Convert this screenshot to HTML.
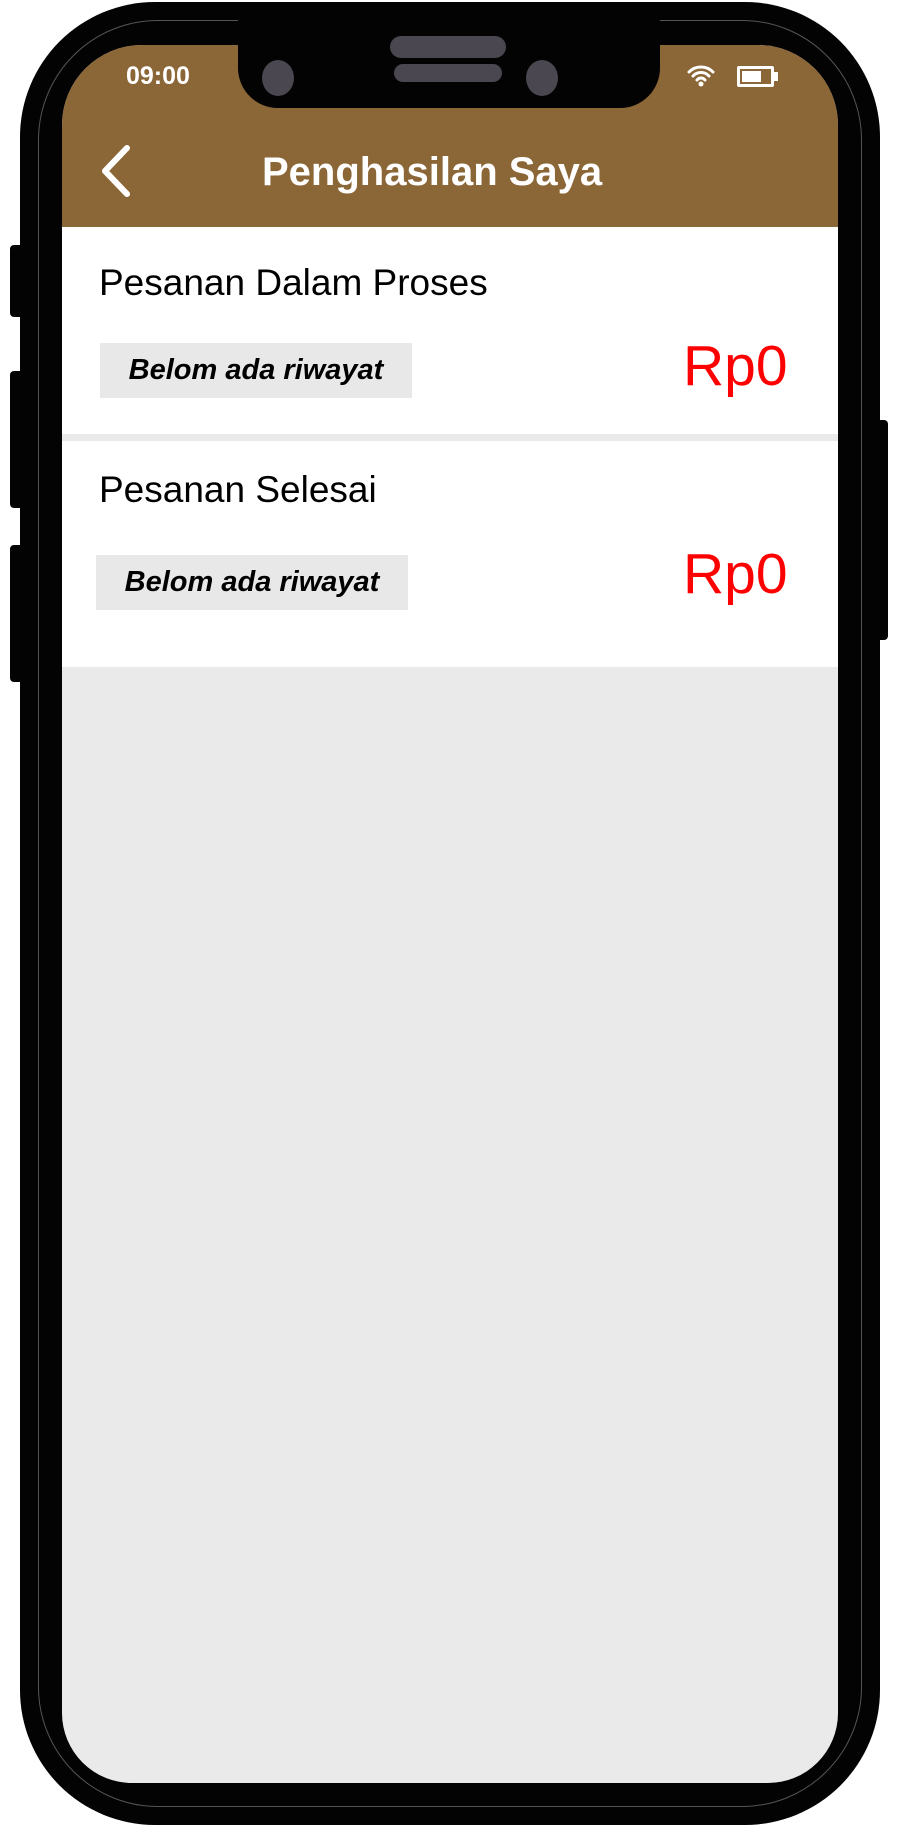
<!DOCTYPE html>
<html><head><meta charset="utf-8"><style>
*{margin:0;padding:0;box-sizing:border-box}
html,body{width:898px;height:1825px;background:#fff;overflow:hidden;position:relative;font-family:"Liberation Sans",sans-serif}
.abs{position:absolute}
.phone{left:20px;top:2px;width:860px;height:1823px;background:#030304;border-radius:135px}
.ring{left:38px;top:20px;width:824px;height:1787px;border:1.5px solid #555;border-radius:120px}
.screen{left:62px;top:45px;width:776px;height:1738px;background:#eaeaea;border-radius:80px 80px 70px 70px;overflow:hidden}
.btn{background:#030304;border-radius:4px}
.pill{height:55px;background:#e8e8e8;font-weight:bold;font-style:italic;font-size:29px;line-height:55px;text-align:center}
</style></head><body>
<div class="abs btn" style="left:10px;top:245px;width:14px;height:72px"></div>
<div class="abs btn" style="left:10px;top:371px;width:14px;height:137px"></div>
<div class="abs btn" style="left:10px;top:545px;width:14px;height:137px"></div>
<div class="abs btn" style="left:874px;top:420px;width:14px;height:220px"></div>
<div class="abs phone"></div>
<div class="abs ring"></div>
<div class="abs screen">
  <div class="abs" style="left:0;top:0;width:776px;height:182px;background:#8b6636"></div>
  <div class="abs" style="left:0;top:182px;width:776px;height:207px;background:#fff"></div>
  <div class="abs" style="left:0;top:396px;width:776px;height:226px;background:#fff"></div>
</div>
<!-- notch -->
<div class="abs" style="left:238px;top:20px;width:422px;height:88px;background:#030304;border-radius:0 0 40px 40px"></div>
<div class="abs" style="left:390px;top:36px;width:116px;height:22px;background:#4a4750;border-radius:11px"></div>
<div class="abs" style="left:394px;top:64px;width:108px;height:18px;background:#4a4750;border-radius:9px"></div>
<div class="abs" style="left:262px;top:60px;width:32px;height:36px;background:#4a4750;border-radius:50%"></div>
<div class="abs" style="left:526px;top:60px;width:32px;height:36px;background:#4a4750;border-radius:50%"></div>
<div class="abs" style="left:126px;top:62px;color:#fff;font-weight:bold;font-size:25px">09:00</div>
<svg class="abs" style="left:686px;top:63px" width="30" height="25" viewBox="0 0 30 25"><path d="M3 9a17 17 0 0 1 24 0M7 13a11 11 0 0 1 16 0M11 17a5 5 0 0 1 8 0" stroke="#fff" stroke-width="3" fill="none" stroke-linecap="round"/><circle cx="15" cy="21" r="2.5" fill="#fff"/></svg>
<div class="abs" style="left:737px;top:66px;width:37px;height:21px;border:3px solid #fff;border-radius:2px"><div style="margin:2px;width:19px;height:11px;background:#fff"></div></div>
<div class="abs" style="left:774px;top:72px;width:4px;height:9px;background:#fff"></div>
<svg class="abs" style="left:96px;top:143px" width="40" height="56" viewBox="0 0 40 56"><path d="M31 5L9 28L31 51" stroke="#fff" stroke-width="6" fill="none" stroke-linecap="round" stroke-linejoin="round"/></svg>
<div class="abs" style="left:262px;top:150px;color:#fff;font-weight:bold;font-size:40px;white-space:nowrap">Penghasilan Saya</div>
<div class="abs" style="left:99px;top:262px;font-size:37px;color:#000;white-space:nowrap">Pesanan Dalam Proses</div>
<div class="abs pill" style="left:100px;top:343px;width:312px">Belom ada riwayat</div>
<div class="abs" style="left:683px;top:333px;font-size:57px;color:#f00">Rp0</div>
<div class="abs" style="left:99px;top:469px;font-size:37px;color:#000;white-space:nowrap">Pesanan Selesai</div>
<div class="abs pill" style="left:96px;top:555px;width:312px">Belom ada riwayat</div>
<div class="abs" style="left:683px;top:541px;font-size:57px;color:#f00">Rp0</div>
</body></html>
